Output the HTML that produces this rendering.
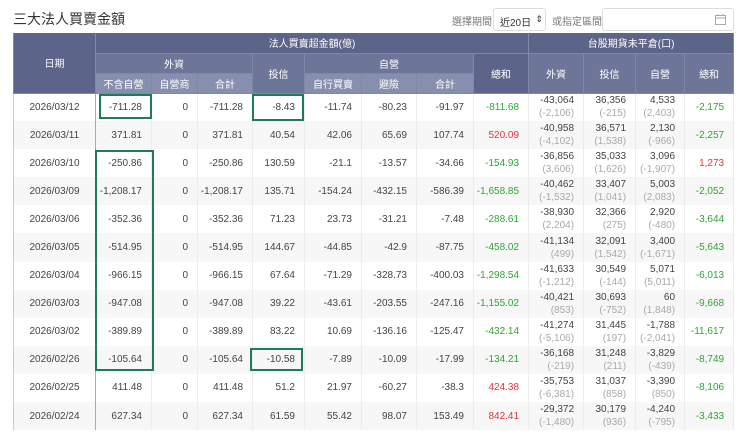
<!DOCTYPE html>
<html><head><meta charset="utf-8"><style>
*{box-sizing:border-box;margin:0;padding:0}
body{width:740px;height:438px;overflow:hidden;background:#fff;font-family:"Liberation Sans","Noto Sans CJK TC",sans-serif;color:#444;position:relative}
.title{position:absolute;left:13px;top:9px;font-size:14px;color:#333}
.lbl{position:absolute;top:13px;font-size:10px;color:#777;white-space:nowrap}
.sel{position:absolute;left:493px;top:8px;width:53px;height:23px;border:1px solid #ddd;border-radius:3px;font-size:10px;color:#333;padding:5px 0 0 6px;white-space:nowrap}
.sel span{position:absolute;right:2px;top:5px;font-size:9px}
.inp{position:absolute;left:602px;top:8px;width:132px;height:23px;border:1px solid #ddd;border-radius:3px}
table{position:absolute;left:13px;top:33px;width:720px;border-collapse:collapse;table-layout:fixed;font-size:10px}
th{color:#fff;font-weight:normal;text-align:center;height:20px;border:1px solid #7f88a6;border-top:none}
.h1{background:#5c6589}.h2{background:#6d7698}.h3{background:#878fae}
td{height:28.1px;text-align:right;padding-right:9px;border-left:1px solid #ececec;border-right:1px solid #ececec;color:#444;line-height:13px}
tr.e td{background:#f7f7f7}
td.d{text-align:center;padding:0;border-right:1px solid #aaa;border-left:1px solid #ccc}
td.dl{border-right:1px dotted #bbb}
.g{color:#2fa532}.r{color:#e0323c}
.p{color:#aaa}
.box{position:absolute;border:2px solid #1f7a5a}
</style></head><body>
<div class="title">三大法人買賣金額</div>
<div class="lbl" style="left:452px">選擇期間</div>
<div class="sel">近20日<span>&#8661;</span></div>
<div class="lbl" style="left:552px">或指定區間</div>
<div class="inp"><svg style="position:absolute;right:7px;top:5px" width="11" height="11" viewBox="0 0 11 11"><rect x="0.5" y="1.5" width="10" height="9" fill="none" stroke="#aaa"/><line x1="0.5" y1="4" x2="10.5" y2="4" stroke="#aaa"/><line x1="3" y1="0" x2="3" y2="2" stroke="#aaa"/><line x1="8" y1="0" x2="8" y2="2" stroke="#aaa"/></svg></div>
<table>
<colgroup><col style="width:82px"><col style="width:56px"><col style="width:46px"><col style="width:55px"><col style="width:52px"><col style="width:57px"><col style="width:55px"><col style="width:57px"><col style="width:55px"><col style="width:55px"><col style="width:52px"><col style="width:49px"><col style="width:49px"></colgroup>
<tr><th class="h1" rowspan="3">日期</th><th class="h1" colspan="8">法人買賣超金額(億)</th><th class="h1" colspan="4">台股期貨未平倉(口)</th></tr>
<tr><th class="h2" colspan="3">外資</th><th class="h2" rowspan="2">投信</th><th class="h2" colspan="3">自營</th><th class="h1" rowspan="2">總和</th><th class="h2" rowspan="2">外資</th><th class="h2" rowspan="2">投信</th><th class="h2" rowspan="2">自營</th><th class="h2" rowspan="2">總和</th></tr>
<tr><th class="h3">不含自營</th><th class="h3">自營商</th><th class="h3">合計</th><th class="h3">自行買賣</th><th class="h3">避險</th><th class="h3">合計</th></tr>
<tr><td class="d">2026/03/12</td><td>-711.28</td><td>0</td><td class="dl">-711.28</td><td class="dl">-8.43</td><td>-11.74</td><td>-80.23</td><td class="dl">-91.97</td><td class="g">-811.68</td><td>-43,064<br><span class="p">(-2,106)</span></td><td>36,356<br><span class="p">(-215)</span></td><td>4,533<br><span class="p">(2,403)</span></td><td class="g">-2,175</td></tr>
<tr class="e"><td class="d">2026/03/11</td><td>371.81</td><td>0</td><td class="dl">371.81</td><td class="dl">40.54</td><td>42.06</td><td>65.69</td><td class="dl">107.74</td><td class="r">520.09</td><td>-40,958<br><span class="p">(-4,102)</span></td><td>36,571<br><span class="p">(1,538)</span></td><td>2,130<br><span class="p">(-966)</span></td><td class="g">-2,257</td></tr>
<tr><td class="d">2026/03/10</td><td>-250.86</td><td>0</td><td class="dl">-250.86</td><td class="dl">130.59</td><td>-21.1</td><td>-13.57</td><td class="dl">-34.66</td><td class="g">-154.93</td><td>-36,856<br><span class="p">(3,606)</span></td><td>35,033<br><span class="p">(1,626)</span></td><td>3,096<br><span class="p">(-1,907)</span></td><td class="r">1,273</td></tr>
<tr class="e"><td class="d">2026/03/09</td><td>-1,208.17</td><td>0</td><td class="dl">-1,208.17</td><td class="dl">135.71</td><td>-154.24</td><td>-432.15</td><td class="dl">-586.39</td><td class="g">-1,658.85</td><td>-40,462<br><span class="p">(-1,532)</span></td><td>33,407<br><span class="p">(1,041)</span></td><td>5,003<br><span class="p">(2,083)</span></td><td class="g">-2,052</td></tr>
<tr><td class="d">2026/03/06</td><td>-352.36</td><td>0</td><td class="dl">-352.36</td><td class="dl">71.23</td><td>23.73</td><td>-31.21</td><td class="dl">-7.48</td><td class="g">-288.61</td><td>-38,930<br><span class="p">(2,204)</span></td><td>32,366<br><span class="p">(275)</span></td><td>2,920<br><span class="p">(-480)</span></td><td class="g">-3,644</td></tr>
<tr class="e"><td class="d">2026/03/05</td><td>-514.95</td><td>0</td><td class="dl">-514.95</td><td class="dl">144.67</td><td>-44.85</td><td>-42.9</td><td class="dl">-87.75</td><td class="g">-458.02</td><td>-41,134<br><span class="p">(499)</span></td><td>32,091<br><span class="p">(1,542)</span></td><td>3,400<br><span class="p">(-1,671)</span></td><td class="g">-5,643</td></tr>
<tr><td class="d">2026/03/04</td><td>-966.15</td><td>0</td><td class="dl">-966.15</td><td class="dl">67.64</td><td>-71.29</td><td>-328.73</td><td class="dl">-400.03</td><td class="g">-1,298.54</td><td>-41,633<br><span class="p">(-1,212)</span></td><td>30,549<br><span class="p">(-144)</span></td><td>5,071<br><span class="p">(5,011)</span></td><td class="g">-6,013</td></tr>
<tr class="e"><td class="d">2026/03/03</td><td>-947.08</td><td>0</td><td class="dl">-947.08</td><td class="dl">39.22</td><td>-43.61</td><td>-203.55</td><td class="dl">-247.16</td><td class="g">-1,155.02</td><td>-40,421<br><span class="p">(853)</span></td><td>30,693<br><span class="p">(-752)</span></td><td>60<br><span class="p">(1,848)</span></td><td class="g">-9,668</td></tr>
<tr><td class="d">2026/03/02</td><td>-389.89</td><td>0</td><td class="dl">-389.89</td><td class="dl">83.22</td><td>10.69</td><td>-136.16</td><td class="dl">-125.47</td><td class="g">-432.14</td><td>-41,274<br><span class="p">(-5,106)</span></td><td>31,445<br><span class="p">(197)</span></td><td>-1,788<br><span class="p">(-2,041)</span></td><td class="g">-11,617</td></tr>
<tr class="e"><td class="d">2026/02/26</td><td>-105.64</td><td>0</td><td class="dl">-105.64</td><td class="dl">-10.58</td><td>-7.89</td><td>-10.09</td><td class="dl">-17.99</td><td class="g">-134.21</td><td>-36,168<br><span class="p">(-219)</span></td><td>31,248<br><span class="p">(211)</span></td><td>-3,829<br><span class="p">(-439)</span></td><td class="g">-8,749</td></tr>
<tr><td class="d">2026/02/25</td><td>411.48</td><td>0</td><td class="dl">411.48</td><td class="dl">51.2</td><td>21.97</td><td>-60.27</td><td class="dl">-38.3</td><td class="r">424.38</td><td>-35,753<br><span class="p">(-6,381)</span></td><td>31,037<br><span class="p">(858)</span></td><td>-3,390<br><span class="p">(850)</span></td><td class="g">-8,106</td></tr>
<tr class="e"><td class="d">2026/02/24</td><td>627.34</td><td>0</td><td class="dl">627.34</td><td class="dl">61.59</td><td>55.42</td><td>98.07</td><td class="dl">153.49</td><td class="r">842.41</td><td>-29,372<br><span class="p">(-1,480)</span></td><td>30,179<br><span class="p">(936)</span></td><td>-4,240<br><span class="p">(-795)</span></td><td class="g">-3,433</td></tr>
</table>
<div class="box" style="left:99px;top:94px;width:53px;height:25px"></div>
<div class="box" style="left:252px;top:94px;width:52px;height:27px"></div>
<div class="box" style="left:95px;top:150px;width:59px;height:221px"></div>
<div class="box" style="left:250px;top:348px;width:53px;height:23px"></div>
</body></html>
